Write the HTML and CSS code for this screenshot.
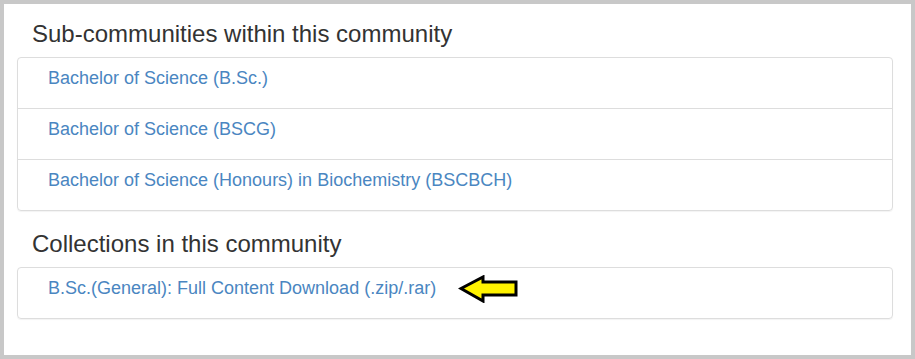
FILE: index.html
```html
<!DOCTYPE html>
<html>

<head>
    <link rel="stylesheet" href="styles.css">
</head>

<body>
    <div class="frame">
        <h2 class="section-title">Sub-communities within this community</h2>
        <div class="list-panel">
            <div class="list-item"><a href="#">Bachelor of Science (B.Sc.)</a></div>
            <div class="list-item"><a href="#">Bachelor of Science (BSCG)</a></div>
            <div class="list-item"><a href="#">Bachelor of Science (Honours) in Biochemistry (BSCBCH)</a></div>
        </div>

        <h2 class="section-title">Collections in this community</h2>
        <div class="list-panel">
            <div class="list-item">
                <a href="#">B.Sc.(General): Full Content Download (.zip/.rar)</a>
                <svg class="arrow" width="62" height="28" viewBox="0 0 62 28">
                    <polygon points="3,13.5 25,2 25,7 58,7 58,20 25,20 25,26" fill="#fff200" stroke="#000" stroke-width="3" stroke-linejoin="miter"/>
                </svg>
            </div>
        </div>
    </div>
</body>

</html>
```

FILE: styles.css
```css
body {
    margin: 0;
    font-family: "Liberation Sans", Arial, sans-serif;
    background-color: #fff;
}

.frame {
    box-sizing: border-box;
    width: 915px;
    height: 359px;
    border: 4px solid #c8c8c8;
    padding: 17px 18px 0 13px;
    background-color: #fff;
}

.section-title {
    margin: 0 0 10px 0;
    padding-left: 15px;
    font-size: 24px;
    font-weight: normal;
    line-height: 26px;
    color: #333;
}

.list-panel {
    border: 1px solid #ddd;
    border-radius: 4px;
    box-shadow: 0 1px 1px rgba(0, 0, 0, 0.05);
    margin-bottom: 20px;
}

.list-item {
    padding: 10px 30px 19px 30px;
    line-height: 21px;
    font-size: 18px;
    border-top: 1px solid #ddd;
}

.list-item:first-child {
    border-top: none;
}

.list-item a {
    color: #4a86c1;
    text-decoration: none;
}

.arrow {
    vertical-align: middle;
    margin: -8px 0 -8px 17px;
}
```
